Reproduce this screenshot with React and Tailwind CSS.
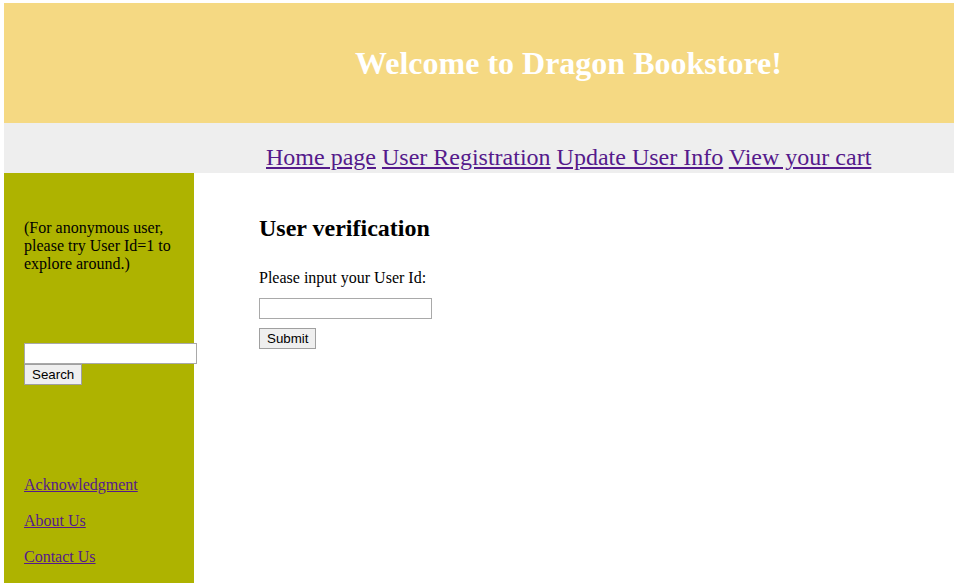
export default function App() {
  const serif = { fontFamily: '"Liberation Serif", "Times New Roman", serif' };
  const sans = { fontFamily: '"Liberation Sans", Arial, sans-serif' };
  return (
    <div className="w-[954px] h-[583px] overflow-hidden bg-white pt-[3px] pl-[4px]" style={serif}>
      <div className="h-[120px] bg-[#f5d983] flex items-center pl-[351px]">
        <h1 className="text-[32px] font-bold text-white leading-none">Welcome to Dragon Bookstore!</h1>
      </div>
      <div className="h-[50px] bg-[#eeeeee] flex items-end pl-[262px]">
        <div className="text-[24px] leading-[28px] text-[#551a8b] whitespace-nowrap mb-[2px]">
          <a href="#" className="underline">Home page</a>{" "}
          <a href="#" className="underline">User Registration</a>{" "}
          <a href="#" className="underline">Update User Info</a>{" "}
          <a href="#" className="underline">View your cart</a>
        </div>
      </div>
      <div className="flex">
        <div className="w-[190px] h-[410px] bg-[#aeb300] pl-[20px] pt-[46px] relative">
          <p className="text-[16px] leading-[18px] text-black w-[150px]">
            (For anonymous user, please try User Id=1 to explore around.)
          </p>
          <div className="mt-[70px] flex flex-col items-start">
            <input className="w-[173px] h-[21px] bg-white border border-[#a9a9a9] relative z-10" />
            <button className="h-[21px] px-[7px] bg-[#efefef] border border-[#a0a0a0] text-[13.33px] text-black leading-none" style={sans}>Search</button>
          </div>
          <div className="mt-[91px] flex flex-col gap-[18px] text-[16px] leading-[18px] text-[#551a8b]">
            <a href="#" className="underline">Acknowledgment</a>
            <a href="#" className="underline">About Us</a>
            <a href="#" className="underline">Contact Us</a>
          </div>
        </div>
        <div className="pl-[65px] pt-[42px]">
          <h2 className="text-[24px] font-bold leading-[26px] text-black">User verification</h2>
          <p className="mt-[28px] text-[16px] leading-[18px] text-black">Please input your User Id:</p>
          <input className="mt-[11px] block w-[173px] h-[21px] bg-white border border-[#a9a9a9]" />
          <button className="mt-[9px] h-[21px] px-[7px] bg-[#efefef] border border-[#a0a0a0] text-[13.33px] text-black leading-none" style={sans}>Submit</button>
        </div>
      </div>
    </div>
  );
}
